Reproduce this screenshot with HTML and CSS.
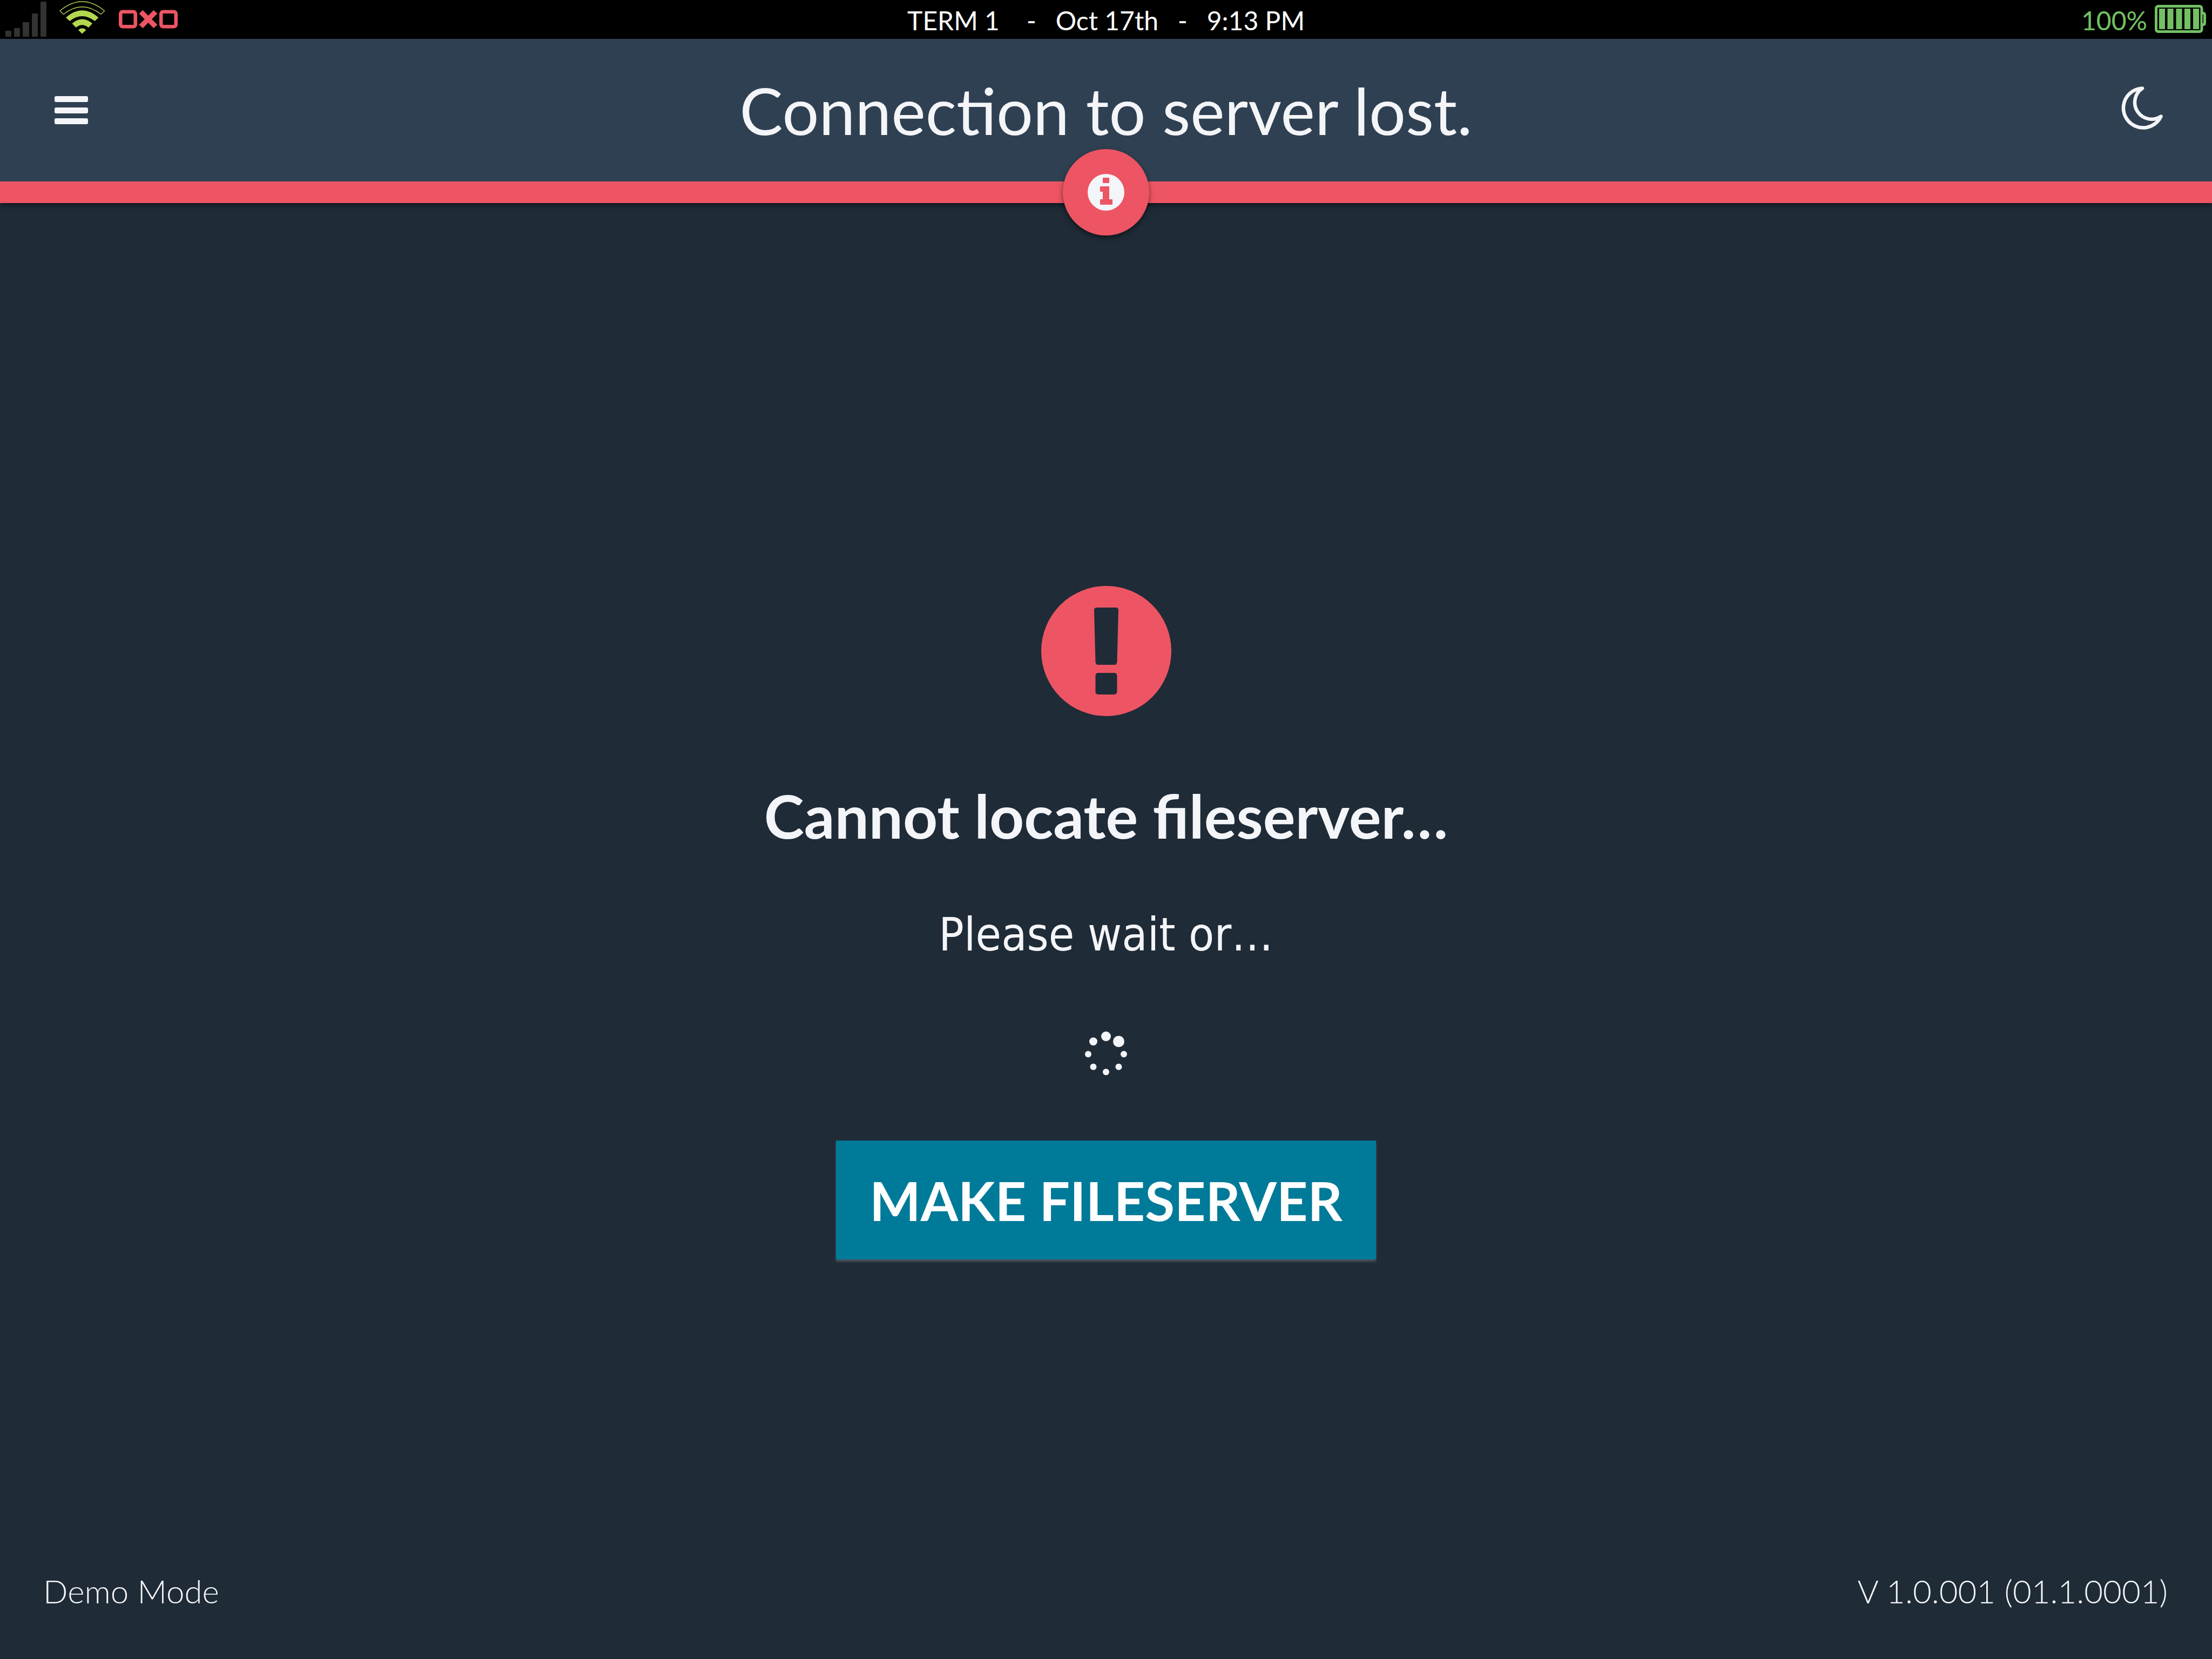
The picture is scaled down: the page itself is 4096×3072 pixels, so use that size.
FILE: index.html
```html
<!DOCTYPE html>
<html lang="en">
<head>
<meta charset="utf-8">
<title>Connection to server lost</title>
<link rel="stylesheet" href="styles.css">
</head>
<body>
<div class="status-bar">
  <div class="status-side">
    <svg class="signal" viewBox="0 0 76 72" fill="#333" aria-label="No cellular signal"><rect y="57" width="11" height="11" rx="1"/><rect x="16" y="52" width="11" height="16" rx="1"/><rect x="32" y="41" width="12" height="27" rx="1"/><rect x="49" y="25" width="11" height="43" rx="1"/><rect x="65" y="3" width="11" height="65" rx="1"/></svg>
    <svg class="wifi" viewBox="110 0 84 72" fill="#b4d750" aria-label="Wi-Fi"><path d="M117.500 26.500L111 20Q152 -14 193.500 20L187 26.500Q152 -1 117.500 26.500Z" fill="none" stroke="#b4d750" stroke-width="1.300"/><path d="M129 39L122 32.500Q152 6 182.500 32.500L175.500 39Q152 21 129 39Z"/><path d="M140.500 51L133.500 43.500Q152 27.500 171 43.500L164 51Q152 41.500 140.500 51Z"/><path d="M152 62.500L145 55.500Q152 49 159.500 55.500Z"/></svg>
    <svg class="network" viewBox="220 0 110 72" fill="none" stroke="#ed5564" stroke-width="6.500" aria-label="Disconnected"><rect x="223.250" y="21.750" width="27.500" height="27.500" rx="4"/><rect x="298.250" y="21.750" width="27.500" height="27.500" rx="4"/><path d="M261 22L288 49M288 22L261 49" stroke-width="9.500"/></svg>
  </div>
  <div class="status-center"><span class="terminal">TERM 1</span><span>-</span><span>Oct 17th</span><span>-</span><span>9:13 PM</span></div>
  <div class="status-side status-right">
    <span>100%</span>
    <svg class="battery" viewBox="0 0 96 72" fill="none" stroke="#73c064" stroke-width="5" aria-label="Battery full"><rect x="2.500" y="11.500" width="84.500" height="47" rx="4"/><path d="M85 24.500H90Q92.500 24.500 92.500 28V42Q92.500 45.500 90 45.500H85"/><path d="M87 27V43" stroke="#000" stroke-width="6"/><path d="M86.500 27V43" stroke-width="4"/><path d="M13.500 16V54M29 16V54M45 16V54M60.500 16V54M76.500 16V54" stroke-width="11"/></svg>
  </div>
</div>
<header class="header">
  <button class="icon-button" aria-label="Menu"><svg class="menu-icon" viewBox="0 0 62 52" fill="#f4f5f8"><rect width="62" height="11" rx="3"/><rect y="21" width="62" height="11" rx="3"/><rect y="41" width="62" height="11" rx="3"/></svg></button>
  <h1 class="title">Connection to server lost.</h1>
  <button class="icon-button" aria-label="Night mode"><svg class="moon-icon" viewBox="0 0 78 88" fill="none" stroke="#f4f5f8" stroke-width="6.500" stroke-linejoin="round"><path d="M39 3.500A36.500 36.500 0 1 0 73.500 55.500A31 31 0 0 1 39 3.500Z"/></svg></button>
  <button class="info-button" aria-label="Information"><svg class="info-icon" viewBox="0 0 68 68"><circle cx="34" cy="34" r="34" fill="#f4f5f8"/><path d="M29 8H39V16H29ZM24 24H39V48H45V56H24V48H29V32H24Z" fill="#ed5564" stroke="#ed5564" stroke-width="2" stroke-linejoin="round"/></svg></button>
</header>
<main class="content">
  <svg class="alert-icon" viewBox="0 0 241 241" aria-hidden="true"><circle cx="120.500" cy="120.500" r="120.500" fill="#ed5564"/><path d="M103 40H138Q143 40 143 45L140.500 141Q140 146 135.500 146H105.500Q101 146 100.500 141L98 45Q98 40 103 40Z" fill="#1f2b37"/><rect x="100.500" y="161" width="40" height="40" rx="5" fill="#1f2b37"/></svg>
  <h2 class="heading">Cannot locate fileserver…</h2>
  <p class="message">Please wait or…</p>
  <svg class="spinner" viewBox="0 0 80 84" fill="#f4f5f8" role="img" aria-label="Loading"><circle cx="40" cy="11" r="9"/><circle cx="63.500" cy="20.500" r="10.500"/><circle cx="73" cy="44" r="6"/><circle cx="63.500" cy="67.500" r="6"/><circle cx="40" cy="77" r="6"/><circle cx="16.500" cy="67.500" r="6"/><circle cx="7" cy="44" r="6"/><circle cx="16.500" cy="20.500" r="7.500"/></svg>
  <button class="primary-button">MAKE FILESERVER</button>
</main>
<footer class="footer"><span>Demo Mode</span><span>V 1.0.001 (01.1.0001)</span></footer>
</body>
</html>
```
FILE: styles.css
```css
* { box-sizing: border-box; }
body {
  margin: 0;
  min-height: 100vh;
  display: flex;
  flex-direction: column;
  background: #1f2b37;
  color: #f4f5f8;
  font-family: Lato, "Liberation Sans", sans-serif;
}
svg { display: block; flex: none; }
button { border: 0; padding: 0; background: none; color: inherit; font-family: inherit; }
.status-bar {
  display: grid;
  grid-template-columns: 1fr auto 1fr;
  height: 72px;
  padding: 0 10px;
  background: #000;
  color: #fff;
  font-size: 48px;
  line-height: 76px;
}
.status-side { display: flex; }
.status-right { justify-content: flex-end; gap: 14px; color: #73c064; }
.status-center { display: flex; gap: 36px; white-space: nowrap; }
.terminal { margin-right: 14px; }
.signal { width: 76px; height: 72px; margin-right: 24px; }
.wifi { width: 84px; height: 72px; margin-right: 26px; }
.network { width: 110px; height: 72px; }
.battery { width: 96px; height: 72px; }
.header {
  position: relative;
  display: flex;
  align-items: center;
  justify-content: space-between;
  height: 304px;
  padding: 0 90px 0 96px;
  background: #2f4052;
  border-bottom: 40px solid #ed5564;
  box-shadow: 0 4px 10px rgba(0, 0, 0, 0.5);
}
.title { margin: 0; font-size: 120px; line-height: 144px; font-weight: 400; }
.menu-icon { width: 72px; height: 52px; }
.moon-icon { width: 78px; height: 88px; }
.info-button {
  position: absolute;
  left: 50%;
  bottom: -100px;
  width: 160px;
  height: 160px;
  margin-left: -80px;
  display: grid;
  place-items: center;
  border-radius: 50%;
  background: #ed5564;
  box-shadow: 0 4px 10px rgba(0, 0, 0, 0.5);
}
.info-icon { width: 68px; height: 68px; }
.content {
  flex: 1;
  display: flex;
  flex-direction: column;
  align-items: center;
  justify-content: center;
  padding-top: 130px;
}
.alert-icon { width: 241px; height: 241px; }
.heading { margin: 116px 0 0; font-size: 112px; line-height: 136px; font-weight: 700; }
.message { margin: 92px 0 0; font-family: "DejaVu Sans Condensed", "DejaVu Sans", sans-serif; font-size: 86px; line-height: 120px; }
.spinner { width: 80px; height: 84px; margin: 118px 0 120px; }
.primary-button {
  height: 220px;
  padding: 0 62px;
  background: #007a99;
  color: #fff;
  font-size: 100px;
  font-weight: 700;
  box-shadow: 0 4px 4px rgba(255, 255, 255, 0.2);
}
.footer {
  display: flex;
  justify-content: space-between;
  padding: 0 82px 90px 80px;
  font-size: 60px;
  line-height: 72px;
  font-weight: 300;
}
```
